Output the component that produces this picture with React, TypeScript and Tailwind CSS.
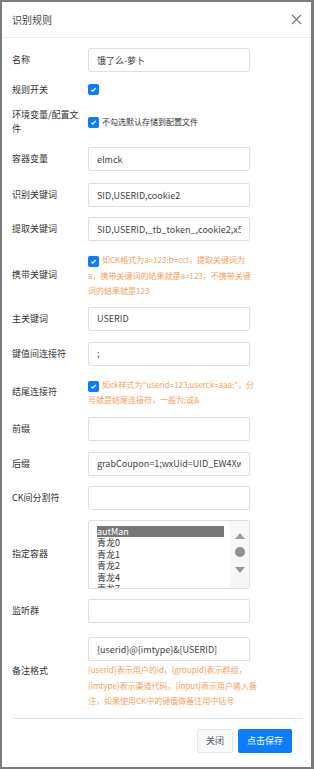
import React from 'react';

const font = { fontFamily: '"Noto Sans CJK SC", "Noto Sans", sans-serif' };

function Check({ className = '' }: { className?: string }) {
  return (
    <span
      className={`inline-flex items-center justify-center w-[11px] h-[11px] rounded-[2px] bg-[#0b7dfb] shrink-0 ${className}`}
    >
      <svg width="7" height="7" viewBox="0 0 8 8">
        <path d="M1.5 4.2 L3.3 5.8 L6.5 2.2" fill="none" stroke="#fff" strokeWidth="1.4" />
      </svg>
    </span>
  );
}

function Label({ children }: { children: React.ReactNode }) {
  return <div className="w-[76px] shrink-0 pr-2 text-[9px] leading-[14px] text-[#333]">{children}</div>;
}

function Field({ value = '' }: { value?: string }) {
  return (
    <input
      readOnly
      value={value}
      className="w-[162px] h-[24px] shrink-0 rounded-[2px] border border-[#dcdfe3] bg-white px-[8px] text-[9px] text-[#444] outline-none"
      style={font}
    />
  );
}

function Row({ label, value, mt }: { label: React.ReactNode; value?: string; mt: string }) {
  return (
    <div className={`flex items-center ${mt}`}>
      <Label>{label}</Label>
      <Field value={value} />
    </div>
  );
}

// helper text, one entry per line as in the screenshot
function Hint({ lines, check }: { lines: string[]; check?: boolean }) {
  return (
    <div className="w-[162px] text-[8px] leading-[15.5px] text-[#f5a15c]">
      {lines.map((l, i) => (
        <div key={i} className="whitespace-nowrap">
          {check && i === 0 && <Check className="mr-[3px] align-[-2px]" />}
          {l}
        </div>
      ))}
    </div>
  );
}

const containers = ['autMan', '青龙0', '青龙1', '青龙2', '青龙4', '青龙7'];

export default function App() {
  return (
    <div className="w-[314px] h-[769px] bg-[#7b7b7b] pt-[2px] pl-[2px] overflow-hidden" style={font}>
      <div className="w-[309px] h-[765px] bg-white flex flex-col">
        {/* header */}
        <div className="h-[36px] shrink-0 border-b border-[#e9ecef] flex items-center justify-between pl-[10px] pr-[9px]">
          <span className="text-[10px] text-[#444]">识别规则</span>
          <svg width="11" height="11" viewBox="0 0 11 11">
            <path d="M1 1 L10 10 M10 1 L1 10" stroke="#777" strokeWidth="1.1" />
          </svg>
        </div>

        {/* body */}
        <div className="pl-[10px] pr-[9px] pt-[10px] flex flex-col">
          <Row label="名称" value="饿了么-萝卜" mt="" />

          <div className="flex items-center h-[15px] mt-[10px]">
            <Label>规则开关</Label>
            <Check />
          </div>

          <div className="flex items-center h-[28px] mt-[11px]">
            <Label>环境变量/配置文件</Label>
            <Check className="mr-[3px]" />
            <span className="text-[8px] text-[#333]">不勾选默认存储到配置文件</span>
          </div>

          <Row label="容器变量" value="elmck" mt="mt-[11px]" />
          <Row label="识别关键词" value="SID,USERID,cookie2" mt="mt-[12px]" />
          <Row label="提取关键词" value="SID,USERID,_tb_token_,cookie2,x5sec,x5sec2" mt="mt-[10px]" />

          <div className="flex items-center mt-[11px]">
            <Label>携带关键词</Label>
            <Hint
              check
              lines={[
                '如CK格式为a=123;b=cct，提取关键词为',
                'a，携带关键词的结果就是a=123，不携带关键',
                '词的结果就是123',
              ]}
            />
          </div>

          <Row label="主关键词" value="USERID" mt="mt-[8px]" />
          <Row label="键值间连接符" value=";" mt="mt-[11px]" />

          <div className="flex items-center mt-[11px]">
            <Label>结尾连接符</Label>
            <Hint
              check
              lines={['如ck样式为"userid=123;userck=aaa;"，分', '号就是结尾连接符，一般为;或&']}
            />
          </div>

          <Row label="前缀" mt="mt-[9px]" />
          <Row label="后缀" value="grabCoupon=1;wxUid=UID_EW4XwQk7" mt="mt-[11px]" />
          <Row label="CK间分割符" mt="mt-[10px]" />

          <div className="flex items-center mt-[10px]">
            <Label>指定容器</Label>
            <div className="w-[162px] h-[69px] rounded-[2px] border border-[#dcdfe3] flex overflow-hidden">
              <div className="flex-1 pl-[8px] pt-[5px] text-[9px] leading-[11.5px] text-[#333]">
                {containers.map((c, i) => (
                  <div key={c} className={i === 0 ? 'w-[127px] bg-[#787878] text-white' : ''}>
                    {c}
                  </div>
                ))}
              </div>
              <div className="w-[19px] bg-[#f7f7f7] flex flex-col items-center pt-[12px]">
                <svg width="10" height="6" viewBox="0 0 10 6">
                  <path d="M0 6 L5 0 L10 6 Z" fill="#9a9a9a" />
                </svg>
                <span className="mt-[8px] w-[10px] h-[10px] rounded-full bg-[#8e8e8e]" />
                <svg width="10" height="6" viewBox="0 0 10 6" className="mt-[10px]">
                  <path d="M0 0 L10 0 L5 6 Z" fill="#9a9a9a" />
                </svg>
              </div>
            </div>
          </div>

          <Row label="监听群" mt="mt-[10px]" />

          <div className="flex items-center mt-[11px]">
            <Label>备注格式</Label>
            <div className="w-[162px]">
              <Field value="{userid}@{imtype}&[USERID]" />
              <div className="mt-[1px]">
                <Hint
                  lines={[
                    '{userid}表示用户的id，{groupid}表示群组，',
                    '{imtype}表示渠道代码，{input}表示用户输入备',
                    '注，如果使用CK中的键值做备注用中括号',
                  ]}
                />
              </div>
            </div>
          </div>

          <div className="mt-[9px] border-t border-[#e6e6e6]" />

          {/* footer */}
          <div className="flex justify-end gap-[5px] pt-[10px] pr-[10px]">
            <button className="h-[24px] px-[8px] rounded-[2px] border border-[#e3e6ea] bg-[#f8f9fa] text-[9px] text-[#555]">
              关闭
            </button>
            <button className="h-[24px] px-[9px] rounded-[2px] bg-[#0a7cfc] text-[9px] text-white">
              点击保存
            </button>
          </div>
        </div>
      </div>
    </div>
  );
}
